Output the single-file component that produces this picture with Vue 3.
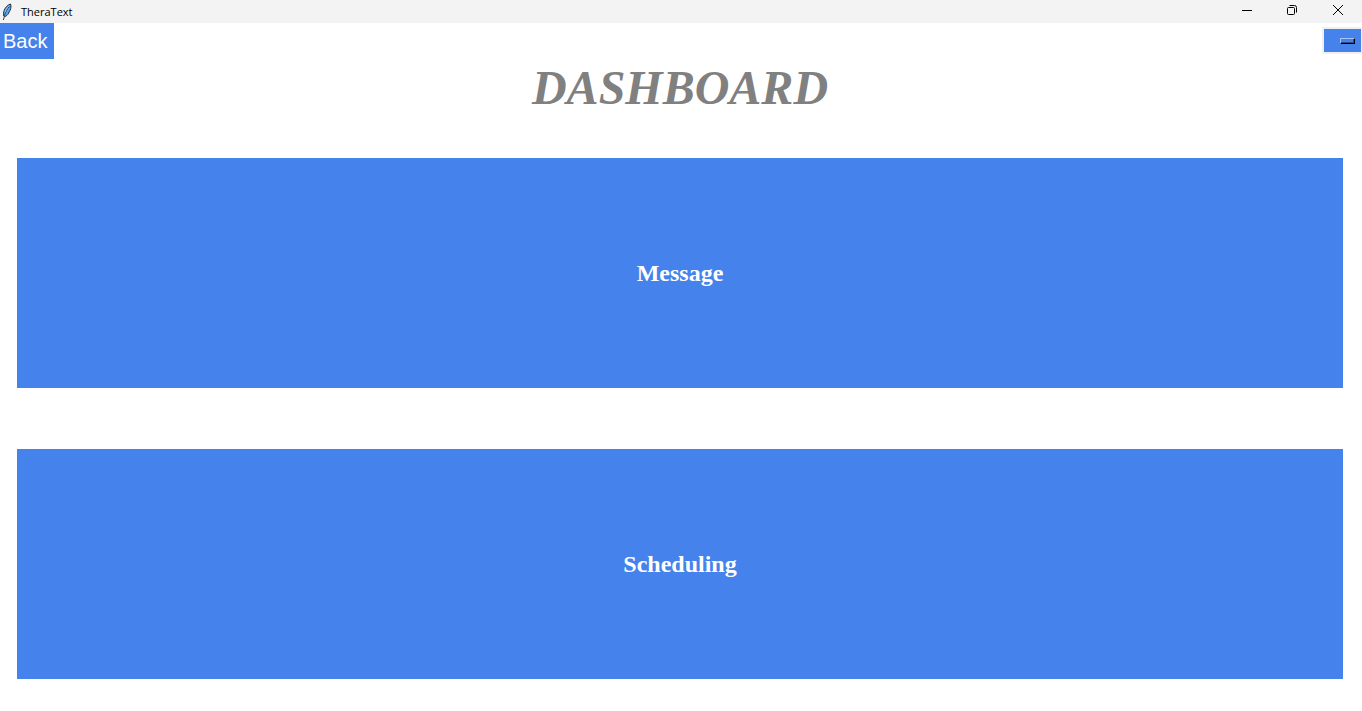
<script setup>
const sections = ['Message', 'Scheduling']
</script>

<template>
  <div class="window">
    <header class="titlebar">
      <svg class="feather" viewBox="0 0 14 18" aria-hidden="true">
        <path d="M10.5 1C8 1.8 5.4 4.2 4.2 7.4C3.4 9.6 3.4 11.4 3.8 13L5.4 13.4C7.4 12.2 8.6 10.8 9.2 8.8L10.2 7.2C11 5 11.2 2.8 10.5 1Z" fill="#5ba6ee" stroke="#1d2733" stroke-width="1" />
        <path d="M9.4 3.4C7.2 6 5.4 9 4.6 12.6L3.4 17" fill="none" stroke="#2c4561" stroke-width="1" />
        <path d="M9 2.8C7 4.6 5.6 7 5 9.4" fill="none" stroke="#9accf8" stroke-width="1" />
      </svg>
      <span class="app-name">TheraText</span>
      <div class="controls">
        <button type="button" aria-label="Minimize">
          <svg viewBox="0 0 12 12"><path d="M2 6.5H12" /></svg>
        </button>
        <button type="button" aria-label="Restore">
          <svg viewBox="0 0 12 12">
            <rect x="1.5" y="3.5" width="7" height="7" rx="1" />
            <path d="M3.5 1.5H8.5Q10.5 1.5 10.5 3.5V8.5" />
          </svg>
        </button>
        <button type="button" aria-label="Close">
          <svg viewBox="0 0 12 12"><path d="M1 1L11 11M11 1L1 11" /></svg>
        </button>
      </div>
    </header>

    <nav class="toolbar">
      <button type="button" class="back">Back</button>
      <button type="button" class="menu" aria-label="Menu"><span class="indicator"></span></button>
    </nav>

    <main class="content">
      <h1>DASHBOARD</h1>
      <div class="cards">
        <button v-for="name in sections" :key="name" type="button" class="card">{{ name }}</button>
      </div>
    </main>
  </div>
</template>

<style>
body {
  margin: 0;
  background: #fff;
}
</style>

<style scoped>
.window {
  display: flex;
  flex-direction: column;
  min-height: 100vh;
  background: #fff;
}

button {
  margin: 0;
  padding: 0;
  border: 0;
  border-radius: 0;
  color: #fff;
  background: #4582ec;
}

.titlebar {
  display: flex;
  align-items: center;
  height: 23px;
  background: #f3f3f3;
}

.feather {
  width: 14px;
  height: 18px;
}

.app-name {
  margin-left: 7px;
  font: 11px/16px "Open Sans", "Noto Sans", sans-serif;
  color: #000;
}

.controls {
  display: flex;
  align-self: stretch;
  margin-left: auto;
  padding-right: 1px;
}

.controls button {
  display: flex;
  justify-content: center;
  width: 46px;
  padding: 4px 0 0;
  background: transparent;
}

.controls svg {
  width: 12px;
  height: 12px;
  fill: none;
  stroke: #000;
}

.toolbar {
  display: flex;
  justify-content: space-between;
  align-items: flex-start;
}

.back {
  padding: 0 7px 0 3px;
  font: 20px/36px "Liberation Sans", Arial, sans-serif;
}

.menu {
  display: flex;
  align-items: center;
  justify-content: flex-end;
  width: 40px;
  height: 27px;
  margin-top: 4px;
  padding-right: 6px;
  border: 2px solid #f0f0f0;
  border-right-width: 1px;
}

.indicator {
  width: 13px;
  height: 4px;
  border: 1px solid #a6c4f8;
  border-right-color: #000;
  border-bottom-color: #000;
  box-shadow: inset -1px -1px #294e8e;
}

.content {
  display: flex;
  flex: 1;
  flex-direction: column;
  padding: 1px 19px 32px 17px;
}

h1 {
  margin: 0 0 42px;
  font: italic bold 48px/56px "Liberation Serif", "Times New Roman", serif;
  color: #808080;
  text-align: center;
}

.cards {
  display: flex;
  flex: 1;
  flex-direction: column;
  gap: 61px;
}

.card {
  flex: 1;
  font: bold 24px/28px "Liberation Serif", "Times New Roman", serif;
}
</style>
